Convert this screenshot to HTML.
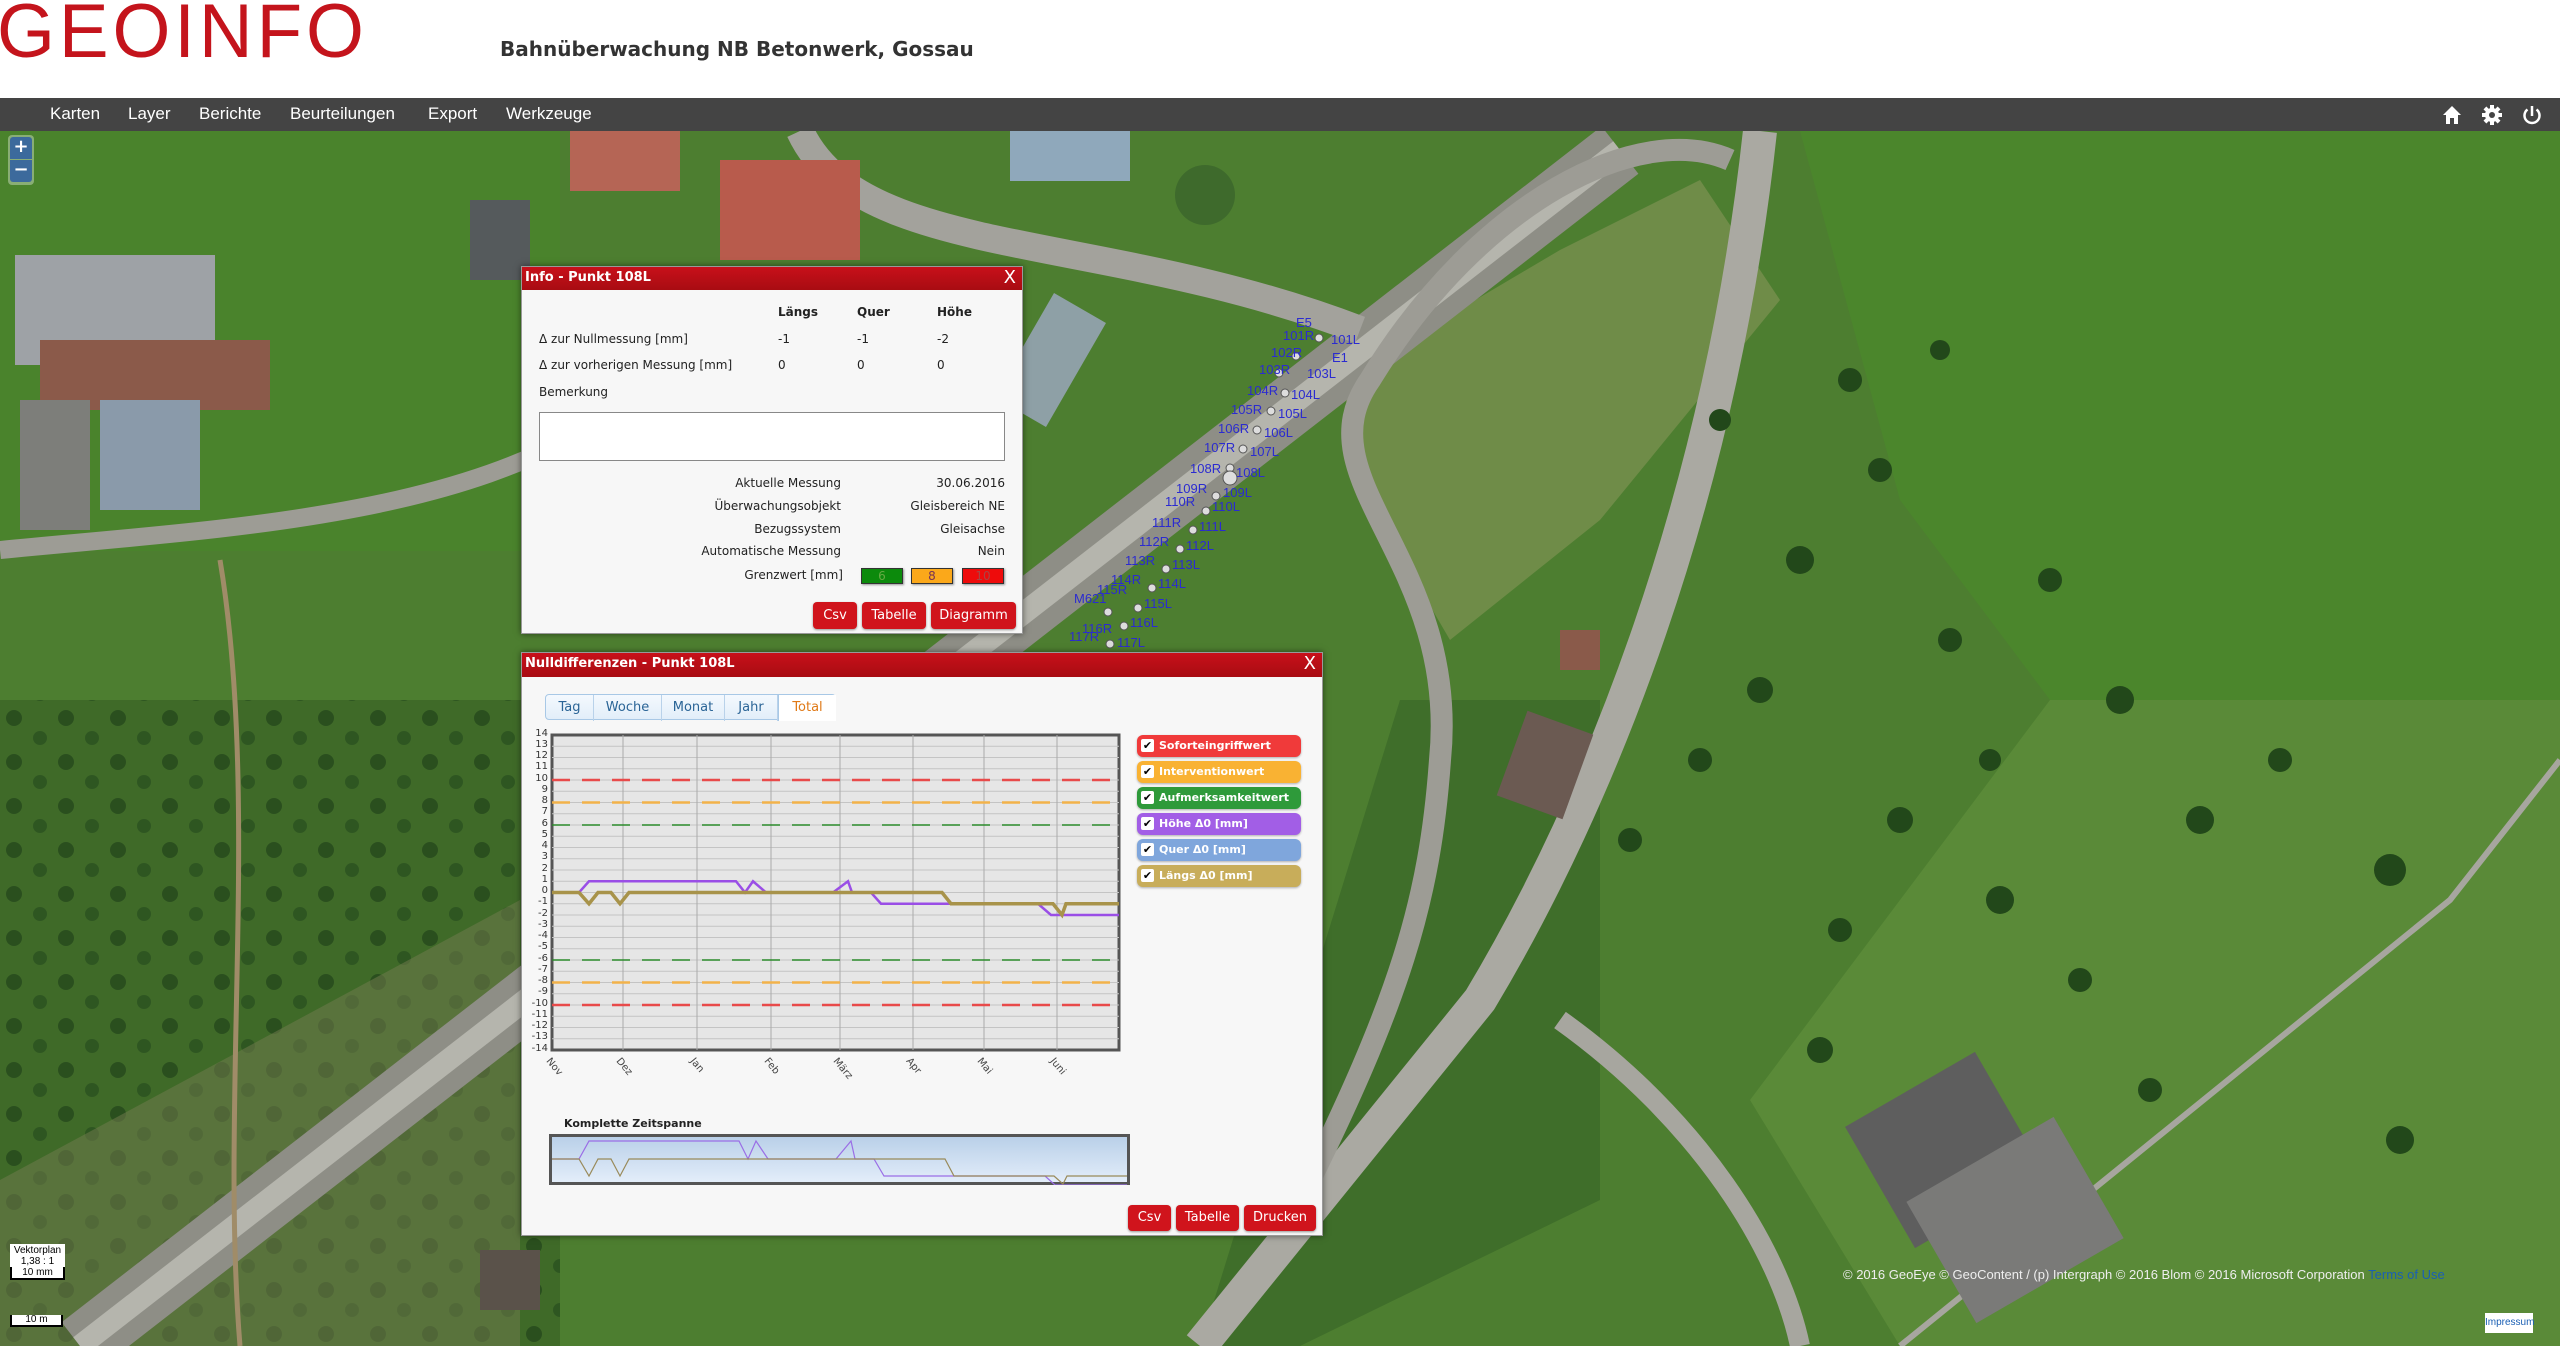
<!DOCTYPE html>
<html><head><meta charset="utf-8"><style>
*{margin:0;padding:0;box-sizing:border-box}
body{width:2560px;height:1346px;overflow:hidden;position:relative;font-family:"DejaVu Sans","Liberation Sans",sans-serif;background:#4f7a33}
#map{position:absolute;left:0;top:0}
#hdr{position:absolute;left:0;top:0;width:2560px;height:98px;background:#fff}
#logo{position:absolute;left:-3px;top:-12px;font-family:"Liberation Sans",sans-serif;font-size:76px;color:#c4141c;letter-spacing:4px;transform:scaleX(0.98);transform-origin:left top}
#title{position:absolute;left:500px;top:37px;font-size:20px;font-weight:bold;color:#333}
#nav{position:absolute;left:0;top:98px;width:2560px;height:33px;background:#444}
#nav span{position:absolute;top:6px;color:#fff;font-family:"Liberation Sans",sans-serif;font-size:17px}
.panel{position:absolute;background:#f7f7f7;border:1px solid #999;box-shadow:0 0 6px rgba(0,0,0,.5)}
.ph{height:23px;background:linear-gradient(#c8101a,#a80c12);color:#fff;font-weight:bold;font-size:13px;padding:3px 3px;position:relative}
.ph b{position:absolute;right:6px;top:0px;font-size:18px;font-weight:normal}
.t{position:absolute;font-size:12px;color:#222;white-space:nowrap}
.r{text-align:right}
.btn{position:absolute;height:27px;background:#d0141c;color:#fff;border-radius:4px;font-size:13px;text-align:center;line-height:27px;box-shadow:0 1px 2px rgba(0,0,0,.4)}
.gw{position:absolute;top:568px;width:42px;height:16px;border:1px solid #333;font-size:12px;text-align:center;line-height:14px;box-shadow:1px 1px 2px rgba(0,0,0,.4)}
.tab{position:absolute;top:0;height:26px;line-height:26px;font-size:13px;color:#2a6496;text-align:center;border-right:1px solid #b9d2ea}
.lg{position:absolute;left:1137px;width:164px;height:22px;border-radius:6px;color:#fff;font-size:11px;font-weight:bold;line-height:22px;padding-left:22px;box-shadow:0 1px 2px rgba(0,0,0,.3)}
.lg:before{content:"✔";position:absolute;left:4px;top:4px;width:13px;height:13px;background:#fff;color:#000;font-size:11px;line-height:13px;text-align:center;border-radius:2px}
.yl{position:absolute;width:40px;text-align:right;font-size:10px;color:#333;left:508px}
.ml{position:absolute;font-size:10px;color:#444;transform:rotate(50deg);transform-origin:left top}
</style></head><body>
<svg id="map" width="2560" height="1346" viewBox="0 0 2560 1346">
<defs>
<pattern id="orch" width="52" height="44" patternUnits="userSpaceOnUse"><rect width="52" height="44" fill="#3f6a28"/><circle cx="14" cy="14" r="8" fill="#2a4f1e"/><circle cx="40" cy="34" r="7" fill="#2e5621"/></pattern>
</defs>
<rect width="2560" height="1346" fill="#4d7e30"/>
<rect x="0" y="131" width="560" height="420" fill="#4a832c"/>
<rect x="0" y="700" width="560" height="646" fill="url(#orch)"/>
<polygon points="0,1180 520,900 520,1346 0,1346" fill="#6f7a4d" opacity=".55"/>
<polygon points="1340,380 1560,250 1700,180 1780,300 1600,520 1450,640 1380,520" fill="#6f8c48"/>
<polygon points="1800,131 2560,131 2560,900 2300,900 2050,700 1900,500" fill="#4b862c"/>
<polygon points="2050,700 2560,700 2560,1346 1900,1346 1750,1100" fill="#5a8a38"/>
<polygon points="1400,700 1600,700 1600,1200 1300,1346 1200,1346" fill="#3f6e2a"/>
<path d="M80,1346 L1620,150" stroke="#8e8e86" stroke-width="60" fill="none"/>
<path d="M80,1346 L1620,150" stroke="#b5b5ad" stroke-width="22" fill="none"/>
<path d="M1760,131 C1720,500 1600,800 1480,1000 L1200,1346" stroke="#aaa9a2" stroke-width="34" fill="none"/>
<path d="M1730,160 C1640,120 1480,200 1370,380 C1300,480 1460,560 1440,760 C1430,900 1400,1000 1300,1200" stroke="#9d9c95" stroke-width="22" fill="none"/>
<path d="M800,131 C860,260 1100,230 1360,330" stroke="#a3a29c" stroke-width="28" fill="none"/>
<path d="M0,550 C200,530 450,520 600,420 L720,300" stroke="#9d9c95" stroke-width="18" fill="none"/>
<path d="M220,560 C260,800 220,1100 240,1346" stroke="#a08c68" stroke-width="5" fill="none"/>
<path d="M1560,1020 C1700,1120 1780,1250 1800,1346" stroke="#a7a69f" stroke-width="20" fill="none"/>
<path d="M1900,1346 L2450,900 L2560,760" stroke="#a7a69f" stroke-width="6" fill="none"/>
<rect x="15" y="255" width="200" height="110" fill="#9ea2a6"/>
<rect x="40" y="340" width="230" height="70" fill="#8b5a4a"/>
<rect x="100" y="400" width="100" height="110" fill="#8a9aaa"/>
<rect x="20" y="400" width="70" height="130" fill="#7d7e7a"/>
<rect x="570" y="131" width="110" height="60" fill="#b56555"/>
<rect x="720" y="160" width="140" height="100" fill="#b85b4c"/>
<rect x="470" y="200" width="60" height="80" fill="#555a5c"/>
<rect x="1010" y="131" width="120" height="50" fill="#8fa8bb"/>
<rect x="1020" y="300" width="60" height="120" fill="#8ea0a6" transform="rotate(30 1050 360)"/>
<circle cx="1205" cy="195" r="30" fill="#3e6a2c"/>
<rect x="1510" y="720" width="70" height="90" fill="#6b5a52" transform="rotate(20 1545 765)"/>
<rect x="1560" y="630" width="40" height="40" fill="#8a5a4a"/>
<rect x="1870" y="1080" width="150" height="140" fill="#5e5e5e" transform="rotate(-30 1945 1150)"/>
<rect x="1930" y="1150" width="170" height="140" fill="#7a7a78" transform="rotate(-30 2015 1220)"/>
<rect x="480" y="1250" width="60" height="60" fill="#5a524a"/>
<g fill="#22481a">
<circle cx="1800" cy="560" r="14"/><circle cx="1880" cy="470" r="12"/><circle cx="1760" cy="690" r="13"/><circle cx="1950" cy="640" r="12"/><circle cx="2050" cy="580" r="12"/><circle cx="2120" cy="700" r="14"/><circle cx="1900" cy="820" r="13"/><circle cx="1840" cy="930" r="12"/><circle cx="2000" cy="900" r="14"/><circle cx="2080" cy="980" r="12"/><circle cx="2200" cy="820" r="14"/><circle cx="2280" cy="760" r="12"/><circle cx="2390" cy="870" r="16"/><circle cx="1820" cy="1050" r="13"/><circle cx="2150" cy="1090" r="12"/><circle cx="1720" cy="420" r="11"/><circle cx="2400" cy="1140" r="14"/><circle cx="1630" cy="840" r="12"/><circle cx="1700" cy="760" r="12"/><circle cx="1990" cy="760" r="11"/><circle cx="1850" cy="380" r="12"/><circle cx="1940" cy="350" r="10"/>
</g>
<g font-family="Liberation Sans,sans-serif" font-size="13" fill="#2b2bd0">
<g fill="#ddd" stroke="#555" stroke-width="1">
<circle cx="1319" cy="338" r="4"/><circle cx="1296" cy="356" r="4"/><circle cx="1279" cy="373" r="4"/><circle cx="1285" cy="393" r="4"/><circle cx="1271" cy="411" r="4"/><circle cx="1257" cy="430" r="4"/><circle cx="1243" cy="449" r="4"/><circle cx="1230" cy="468" r="4"/><circle cx="1230" cy="478" r="7"/><circle cx="1216" cy="496" r="4"/><circle cx="1206" cy="511" r="4"/><circle cx="1193" cy="530" r="4"/><circle cx="1180" cy="549" r="4"/><circle cx="1166" cy="569" r="4"/><circle cx="1152" cy="588" r="4"/><circle cx="1138" cy="608" r="4"/><circle cx="1124" cy="626" r="4"/><circle cx="1110" cy="644" r="4"/><circle cx="1108" cy="612" r="4"/>
</g>
<text x="1296" y="327">E5</text><text x="1283" y="340">101R</text><text x="1331" y="344">101L</text>
<text x="1271" y="357">102R</text><text x="1332" y="362">E1</text><text x="1259" y="374">103R</text><text x="1307" y="378">103L</text>
<text x="1247" y="395">104R</text><text x="1291" y="399">104L</text><text x="1231" y="414">105R</text><text x="1278" y="418">105L</text>
<text x="1218" y="433">106R</text><text x="1264" y="437">106L</text><text x="1204" y="452">107R</text><text x="1250" y="456">107L</text>
<text x="1190" y="473">108R</text><text x="1236" y="477">108L</text><text x="1176" y="493">109R</text><text x="1223" y="497">109L</text>
<text x="1165" y="506">110R</text><text x="1212" y="511">110L</text><text x="1152" y="527">111R</text><text x="1199" y="531">111L</text>
<text x="1139" y="546">112R</text><text x="1186" y="550">112L</text><text x="1125" y="565">113R</text><text x="1172" y="569">113L</text>
<text x="1111" y="584">114R</text><text x="1158" y="588">114L</text><text x="1097" y="594">115R</text><text x="1144" y="608">115L</text>
<text x="1074" y="603">M621</text><text x="1082" y="633">116R</text><text x="1130" y="627">116L</text><text x="1069" y="641">117R</text><text x="1117" y="647">117L</text>
</g>
</svg>

<div id="hdr"><div id="logo">GEOINFO</div><div id="title">Bahnüberwachung NB Betonwerk, Gossau</div></div>
<div id="nav"><span style="left:50px">Karten</span><span style="left:128px">Layer</span><span style="left:199px">Berichte</span><span style="left:290px">Beurteilungen</span><span style="left:428px">Export</span><span style="left:506px">Werkzeuge</span>
<svg style="position:absolute;left:2440px;top:7px" width="110" height="20" viewBox="0 0 110 20">
<path d="M3,10 L12,1 L21,10 L18,10 L18,19 L14,19 L14,13 L10,13 L10,19 L6,19 L6,10Z" fill="#fff"/>
<g transform="translate(52,10)" fill="#fff"><circle r="7"/><g><rect x="-2" y="-10" width="4" height="20"/><rect x="-10" y="-2" width="20" height="4"/><rect x="-2" y="-10" width="4" height="20" transform="rotate(45)"/><rect x="-2" y="-10" width="4" height="20" transform="rotate(-45)"/></g><circle r="3" fill="#444"/></g>
<g transform="translate(92,10)" fill="none" stroke="#fff" stroke-width="2.5"><path d="M-4.5,-5.5 A7.5,7.5 0 1 0 4.5,-5.5"/><path d="M0,-9 L0,1"/></g>
</svg></div>
<div style="position:absolute;left:8px;top:135px;width:26px;height:50px;border-radius:4px;background:rgba(255,255,255,.35);padding:2px">
<div style="height:22px;background:#3c6a9c;color:#fff;font-size:18px;line-height:20px;text-align:center;border-radius:3px 3px 0 0;font-weight:bold">+</div>
<div style="height:22px;background:#3c6a9c;color:#fff;font-size:18px;line-height:20px;text-align:center;margin-top:1px;border-radius:0 0 3px 3px;font-weight:bold">−</div></div>

<div class="panel" style="left:521px;top:266px;width:502px;height:368px">
<div class="ph">Info - Punkt 108L<b>X</b></div></div>
<div class="t" style="left:778px;top:305px;font-weight:bold">Längs</div>
<div class="t" style="left:857px;top:305px;font-weight:bold">Quer</div>
<div class="t" style="left:937px;top:305px;font-weight:bold">Höhe</div>
<div class="t" style="left:539px;top:332px">Δ zur Nullmessung [mm]</div><div class="t" style="left:778px;top:332px">-1</div><div class="t" style="left:857px;top:332px">-1</div><div class="t" style="left:937px;top:332px">-2</div>
<div class="t" style="left:539px;top:358px">Δ zur vorherigen Messung [mm]</div><div class="t" style="left:778px;top:358px">0</div><div class="t" style="left:857px;top:358px">0</div><div class="t" style="left:937px;top:358px">0</div>
<div class="t" style="left:539px;top:385px">Bemerkung</div>
<div style="position:absolute;left:539px;top:412px;width:466px;height:49px;background:#fff;border:1px solid #888"></div>
<div class="t r" style="left:641px;width:200px;top:476px">Aktuelle Messung</div><div class="t r" style="left:805px;width:200px;top:476px">30.06.2016</div>
<div class="t r" style="left:641px;width:200px;top:499px">Überwachungsobjekt</div><div class="t r" style="left:805px;width:200px;top:499px">Gleisbereich NE</div>
<div class="t r" style="left:641px;width:200px;top:522px">Bezugssystem</div><div class="t r" style="left:805px;width:200px;top:522px">Gleisachse</div>
<div class="t r" style="left:641px;width:200px;top:544px">Automatische Messung</div><div class="t r" style="left:805px;width:200px;top:544px">Nein</div>
<div class="t r" style="left:641px;width:202px;top:568px">Grenzwert [mm]</div>
<div class="gw" style="left:861px;background:#0c8a0c;color:#6a4">6</div><div class="gw" style="left:911px;background:#fba81a;color:#735">8</div><div class="gw" style="left:962px;background:#ee0b0b;color:#a44">10</div>
<div class="btn" style="left:813px;top:602px;width:44px">Csv</div><div class="btn" style="left:862px;top:602px;width:64px">Tabelle</div><div class="btn" style="left:931px;top:602px;width:85px">Diagramm</div>

<div class="panel" style="left:521px;top:652px;width:802px;height:584px">
<div class="ph" style="height:24px">Nulldifferenzen - Punkt 108L<b>X</b></div></div>
<div style="position:absolute;left:545px;top:694px;width:291px;height:26px;border:1px solid #a8c8e6;border-radius:4px;background:linear-gradient(#f4f9fe,#e2eef9)">
<div class="tab" style="left:0;width:48px">Tag</div><div class="tab" style="left:48px;width:68px">Woche</div><div class="tab" style="left:116px;width:63px">Monat</div><div class="tab" style="left:179px;width:53px">Jahr</div><div class="tab" style="left:232px;width:58px;background:#fff;color:#e07a18;border:none;border-left:1px solid #a8c8e6">Total</div></div>

<svg style="position:absolute;left:550px;top:733px" width="572" height="320" viewBox="-2 -2 572 320">
<rect x="0" y="0" width="567" height="315" fill="#e6e6e6" stroke="#555" stroke-width="3"/>
<g stroke="#c4c4c4" stroke-width="1">
<path d="M0,11.25H567M0,22.5H567M0,33.75H567M0,45H567M0,56.25H567M0,67.5H567M0,78.75H567M0,90H567M0,101.25H567M0,112.5H567M0,123.75H567M0,135H567M0,146.25H567M0,157.5H567M0,168.75H567M0,180H567M0,191.25H567M0,202.5H567M0,213.75H567M0,225H567M0,236.25H567M0,247.5H567M0,258.75H567M0,270H567M0,281.25H567M0,292.5H567M0,303.75H567"/>
<path d="M71,0V315M145,0V315M219,0V315M288,0V315M361,0V315M432,0V315M505,0V315" stroke="#aaa"/>
</g>
<g stroke-width="2.5" stroke-dasharray="18,12" fill="none">
<path d="M0,45H567M0,270H567" stroke="#e84a4a"/>
<path d="M0,67.5H567M0,247.5H567" stroke="#f2b24a"/>
<path d="M0,90H567M0,225H567" stroke="#2a8a2a" stroke-width="1.5"/>
</g>
<polyline fill="none" stroke="#9a4ee6" stroke-width="2.5" points="0,157.5 27,157.5 37,146.25 184,146.25 193,157.5 201,146.25 214,157.5 281,157.5 296,146.25 300,157.5 319,157.5 329,168.75 399,168.75 486,168.75 499,180 567,180"/>
<polyline fill="none" stroke="#a8934a" stroke-width="3.5" points="0,157.5 27,157.5 37,168.75 46,157.5 59,157.5 68,168.75 77,157.5 390,157.5 399,168.75 501,168.75 510,180 514,168.75 567,168.75"/>
</svg>
<div class="yl" style="top:728px">14</div><div class="yl" style="top:739px">13</div><div class="yl" style="top:750px">12</div><div class="yl" style="top:761px">11</div><div class="yl" style="top:773px">10</div><div class="yl" style="top:784px">9</div><div class="yl" style="top:795px">8</div><div class="yl" style="top:806px">7</div><div class="yl" style="top:818px">6</div><div class="yl" style="top:829px">5</div><div class="yl" style="top:840px">4</div><div class="yl" style="top:851px">3</div><div class="yl" style="top:863px">2</div><div class="yl" style="top:874px">1</div><div class="yl" style="top:885px">0</div><div class="yl" style="top:896px">-1</div><div class="yl" style="top:908px">-2</div><div class="yl" style="top:919px">-3</div><div class="yl" style="top:930px">-4</div><div class="yl" style="top:941px">-5</div><div class="yl" style="top:953px">-6</div><div class="yl" style="top:964px">-7</div><div class="yl" style="top:975px">-8</div><div class="yl" style="top:986px">-9</div><div class="yl" style="top:998px">-10</div><div class="yl" style="top:1009px">-11</div><div class="yl" style="top:1020px">-12</div><div class="yl" style="top:1031px">-13</div><div class="yl" style="top:1043px">-14</div>
<div class="ml" style="left:552px;top:1056px">Nov</div><div class="ml" style="left:622px;top:1056px">Dez</div><div class="ml" style="left:696px;top:1056px">Jan</div><div class="ml" style="left:770px;top:1056px">Feb</div><div class="ml" style="left:839px;top:1056px">März</div><div class="ml" style="left:912px;top:1056px">Apr</div><div class="ml" style="left:983px;top:1056px">Mai</div><div class="ml" style="left:1056px;top:1056px">Juni</div>

<div class="lg" style="top:735px;background:#f03a3a">Soforteingriffwert</div>
<div class="lg" style="top:761px;background:#f9b233">Interventionwert</div>
<div class="lg" style="top:787px;background:#2e9a3a">Aufmerksamkeitwert</div>
<div class="lg" style="top:813px;background:#a25ee6">Höhe Δ0 [mm]</div>
<div class="lg" style="top:839px;background:#7fa6dc">Quer Δ0 [mm]</div>
<div class="lg" style="top:865px;background:#c8ad5a">Längs Δ0 [mm]</div>

<div class="t" style="left:564px;top:1117px;font-size:11px;font-weight:bold">Komplette Zeitspanne</div>
<svg style="position:absolute;left:549px;top:1134px" width="581" height="51" viewBox="0 0 581 51">
<defs><linearGradient id="nv" x1="0" y1="0" x2="0" y2="1"><stop offset="0" stop-color="#b8cfe8"/><stop offset="1" stop-color="#e4eefa"/></linearGradient></defs>
<rect x="1.5" y="1.5" width="578" height="48" fill="url(#nv)" stroke="#555" stroke-width="3"/>
<polyline fill="none" stroke="#9a6ee6" stroke-width="1.2" points="3,25 30,25 40,7 190,7 199,25 207,7 219,25 287,25 302,7 306,25 325,25 335,42 405,42 496,42 506,51 578,51"/>
<polyline fill="none" stroke="#998a5a" stroke-width="1.2" points="3,25 30,25 40,42 49,25 62,25 71,42 80,25 396,25 405,42 505,42 514,50 518,42 578,42"/>
</svg>
<div class="btn" style="left:1128px;top:1205px;width:43px;height:26px;line-height:26px">Csv</div><div class="btn" style="left:1176px;top:1205px;width:63px;height:26px;line-height:26px">Tabelle</div><div class="btn" style="left:1244px;top:1205px;width:72px;height:26px;line-height:26px">Drucken</div>

<div style="position:absolute;left:10px;top:1244px;width:55px;font-family:'Liberation Sans',sans-serif;font-size:10px;text-align:center;background:#fff;line-height:11px;padding-top:1px">Vektorplan<br>1,38 : 1<div style="border:2px solid #000;border-top:none;font-size:10px">10 mm</div></div>
<div style="position:absolute;left:10px;top:1315px;width:53px;height:12px;background:#fff;border:2px solid #000;border-top:none;font-family:'Liberation Sans',sans-serif;font-size:10px;text-align:center;line-height:10px">10 m</div>
<div style="position:absolute;left:1843px;top:1267px;font-family:'Liberation Sans',sans-serif;font-size:13px;color:#eee;white-space:nowrap">© 2016 GeoEye © GeoContent / (p) Intergraph © 2016 Blom © 2016 Microsoft Corporation <span style="color:#1a5fb4">Terms of Use</span></div>
<div style="position:absolute;left:2485px;top:1313px;width:48px;height:20px;background:#fff;font-family:'Liberation Sans',sans-serif;font-size:10px;color:#1a5fb4;line-height:20px;text-align:center">Impressum</div>
</body></html>
